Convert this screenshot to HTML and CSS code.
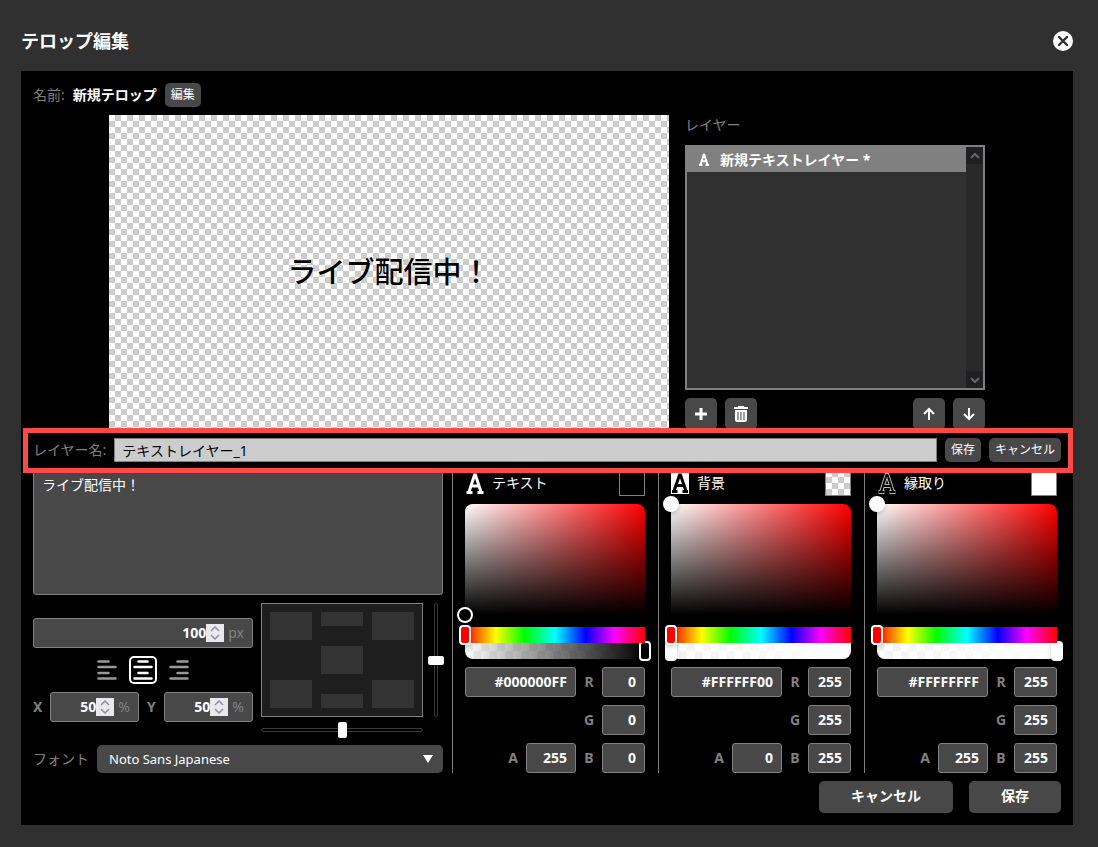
FILE: index.html
```html
<!DOCTYPE html>
<html lang="ja">
<head>
    <meta charset="utf-8">
    <title>テロップ編集</title>
    <link rel="stylesheet" href="styles.css">
</head>
<body>

<div class="dialog">
    <div class="dialog-header">
        <h1 class="title">テロップ編集</h1>
        <button class="close" aria-label="閉じる">
            <svg width="20" height="20" viewBox="0 0 20 20"><circle cx="10" cy="10" r="10" fill="#fff"/><path d="M6 6l8 8M14 6l-8 8" stroke="#303030" stroke-width="2.4" stroke-linecap="round"/></svg>
        </button>
    </div>

    <div class="panel">
        <div class="name-row">
            <span class="caption">名前:</span>
            <b>新規テロップ</b>
            <button class="btn-small">編集</button>
        </div>

        <div class="stage">
            <div class="preview checker">ライブ配信中！</div>
            <div class="layers">
                <div class="caption layers-title">レイヤー</div>
                <div class="layer-list">
                    <div class="layer-items">
                        <div class="layer-item"><svg class="layer-icon" width="12" height="13" viewBox="0 0 20 22"><path d="M4 20L9.500 3h1L16 20M6 14h8M1.500 20.500h6M12.500 20.500h6"/></svg>新規テキストレイヤー *</div>
                    </div>
                    <div class="scrollbar">
                        <div class="scroll-btn"><svg width="10" height="6" viewBox="0 0 10 6"><path d="M1 5l4-4 4 4"/></svg></div>
                        <div class="scroll-btn"><svg width="10" height="6" viewBox="0 0 10 6"><path d="M1 1l4 4 4-4"/></svg></div>
                    </div>
                </div>
                <div class="layer-tools">
                    <button class="btn-icon" aria-label="追加"><svg width="16" height="16" viewBox="0 0 16 16"><path d="M8 2v12M2 8h12" stroke="#fff" stroke-width="3"/></svg></button>
                    <button class="btn-icon" aria-label="削除"><svg width="16" height="16" viewBox="0 0 16 16"><path d="M1 1h4V0h6v1h4v2H1z" fill="#fff"/><path d="M2 4h12v10q0 2-2 2H4q-2 0-2-2z" fill="#fff"/><path d="M5 6v8M8 6v8M11 6v8" stroke="#777" stroke-width="1.4"/></svg></button>
                    <button class="btn-icon push" aria-label="上へ"><svg width="16" height="16" viewBox="0 0 16 16"><path d="M8 14V3M3 8l5-5 5 5" fill="none" stroke="#fff" stroke-width="2"/></svg></button>
                    <button class="btn-icon" aria-label="下へ"><svg width="16" height="16" viewBox="0 0 16 16"><path d="M8 2v11M3 8l5 5 5-5" fill="none" stroke="#fff" stroke-width="2"/></svg></button>
                </div>
            </div>
        </div>

        <div class="layer-name-row">
            <label class="caption" for="layerName">レイヤー名:</label>
            <input class="layer-name" type="text" id="layerName" value="テキストレイヤー_1">
            <button class="btn-small">保存</button>
            <button class="btn-small">キャンセル</button>
        </div>

        <div class="controls">
            <div class="text-col">
                <textarea class="text-input" aria-label="テキスト">ライブ配信中！</textarea>

                <div class="layout-row">
                    <div class="size-group">
                        <div class="number-box">
                            <input type="text" value="100" aria-label="サイズ">
                            <span class="spin"><svg width="10" height="14" viewBox="0 0 10 14"><path d="M1 5l4-4 4 4M1 9l4 4 4-4"/></svg></span>
                            <span class="unit">px</span>
                        </div>
                        <div class="align-row">
                            <button class="align" aria-label="左揃え"><svg width="20" height="20" viewBox="0 0 20 20"><path d="M1.5 1.5h10M1.5 7h17M1.5 13h10M1.5 18.5h17"/></svg></button>
                            <button class="align active" aria-label="中央揃え"><svg width="20" height="20" viewBox="0 0 20 20"><path d="M5.5 1.5h9M1.5 7h17M5.5 13h9M1.5 18.5h17"/></svg></button>
                            <button class="align" aria-label="右揃え"><svg width="20" height="20" viewBox="0 0 20 20"><path d="M8.5 1.5h10M1.5 7h17M8.5 13h10M1.5 18.5h17"/></svg></button>
                        </div>
                        <div class="xy-row">
                            <label class="xy-label" for="posX">X</label>
                            <div class="number-box">
                                <input type="text" id="posX" value="50">
                                <span class="spin"><svg width="10" height="14" viewBox="0 0 10 14"><path d="M1 5l4-4 4 4M1 9l4 4 4-4"/></svg></span>
                                <span class="unit">%</span>
                            </div>
                            <label class="xy-label second" for="posY">Y</label>
                            <div class="number-box">
                                <input type="text" id="posY" value="50">
                                <span class="spin"><svg width="10" height="14" viewBox="0 0 10 14"><path d="M1 5l4-4 4 4M1 9l4 4 4-4"/></svg></span>
                                <span class="unit">%</span>
                            </div>
                        </div>
                    </div>
                    <div class="position">
                        <div class="position-top">
                            <div class="position-grid">
                                <button class="cell" aria-label="左上"></button>
                                <button class="cell half" aria-label="上"></button>
                                <button class="cell" aria-label="右上"></button>
                                <button class="cell middle" aria-label="中央"></button>
                                <button class="cell" aria-label="左下"></button>
                                <button class="cell half bottom" aria-label="下"></button>
                                <button class="cell" aria-label="右下"></button>
                            </div>
                            <input class="slider vertical" type="range" value="50" aria-label="縦位置">
                        </div>
                        <input class="slider" type="range" value="50" aria-label="横位置">
                    </div>
                </div>

                <div class="font-row">
                    <label class="caption" for="font">フォント</label>
                    <div class="select-box">
                        <select id="font"><option>Noto Sans Japanese</option></select>
                        <svg class="arrow" width="10" height="8" viewBox="0 0 10 8"><path d="M0 0h10L5 8z" fill="#fff"/></svg>
                    </div>
                </div>
            </div>

            <div class="color-col">
                <div class="color-head">
                    <svg class="color-icon" width="20" height="22" viewBox="0 0 20 22"><path d="M4 20L9.500 3h1L16 20M6 14h8M1.500 20.500h6M12.500 20.500h6"/></svg>
                    テキスト<span class="swatch"></span>
                </div>
                <div class="saturation"><span class="pointer at-black"></span></div>
                <div class="hue"><input class="track" type="range" min="0" max="360" value="0" aria-label="色相"></div>
                <div class="alpha alpha-black"><input class="track" type="range" min="0" max="255" value="255" aria-label="不透明度"></div>
                <div class="rgba">
                    <div class="rgba-row">
                        <input class="value hex" type="text" value="#000000FF" aria-label="カラーコード">
                        <label for="r1">R</label><input class="value" type="text" id="r1" value="0">
                    </div>
                    <div class="rgba-row"><label for="g1">G</label><input class="value" type="text" id="g1" value="0"></div>
                    <div class="rgba-row">
                        <label for="a1">A</label><input class="value opacity" type="text" id="a1" value="255">
                        <label for="b1">B</label><input class="value" type="text" id="b1" value="0">
                    </div>
                </div>
            </div>

            <div class="color-col">
                <div class="color-head">
                    <svg class="color-icon filled" width="18" height="22" viewBox="1 0 18 22"><path d="M4 19L9.500 3h1L16 19M6 13.500h8M2 19.500h5.500M12.500 19.500h5.500"/></svg>
                    背景<span class="swatch checker"></span>
                </div>
                <div class="saturation"><span class="pointer"></span></div>
                <div class="hue"><input class="track" type="range" min="0" max="360" value="0" aria-label="色相"></div>
                <div class="alpha"><input class="track" type="range" min="0" max="255" value="0" aria-label="不透明度"></div>
                <div class="rgba">
                    <div class="rgba-row">
                        <input class="value hex" type="text" value="#FFFFFF00" aria-label="カラーコード">
                        <label for="r2">R</label><input class="value" type="text" id="r2" value="255">
                    </div>
                    <div class="rgba-row"><label for="g2">G</label><input class="value" type="text" id="g2" value="255"></div>
                    <div class="rgba-row">
                        <label for="a2">A</label><input class="value opacity" type="text" id="a2" value="0">
                        <label for="b2">B</label><input class="value" type="text" id="b2" value="255">
                    </div>
                </div>
            </div>

            <div class="color-col">
                <div class="color-head">
                    <svg class="color-icon outline" width="20" height="22" viewBox="0 0 20 22"><path class="edge" d="M4 20L9.500 3h1L16 20M6 14h8M1.500 20h6M12.500 20h6"/><path class="core" d="M4 20L9.500 3h1L16 20M6 14h8M1.500 20h6M12.500 20h6"/></svg>
                    縁取り<span class="swatch white"></span>
                </div>
                <div class="saturation"><span class="pointer"></span></div>
                <div class="hue"><input class="track" type="range" min="0" max="360" value="0" aria-label="色相"></div>
                <div class="alpha"><input class="track" type="range" min="0" max="255" value="255" aria-label="不透明度"></div>
                <div class="rgba">
                    <div class="rgba-row">
                        <input class="value hex" type="text" value="#FFFFFFFF" aria-label="カラーコード">
                        <label for="r3">R</label><input class="value" type="text" id="r3" value="255">
                    </div>
                    <div class="rgba-row"><label for="g3">G</label><input class="value" type="text" id="g3" value="255"></div>
                    <div class="rgba-row">
                        <label for="a3">A</label><input class="value opacity" type="text" id="a3" value="255">
                        <label for="b3">B</label><input class="value" type="text" id="b3" value="255">
                    </div>
                </div>
            </div>
        </div>

        <div class="footer">
            <button class="btn">キャンセル</button>
            <button class="btn">保存</button>
        </div>
    </div>
</div>

</body>
</html>
```

FILE: styles.css
```css
* {
    box-sizing: border-box;
}
body {
    margin: 0;
    background: #303030;
    color: #fff;
    font-family: "Noto Sans", "Noto Sans CJK JP", sans-serif;
    font-size: 14px;
    line-height: 20px;
}
button, input, select, textarea {
    margin: 0;
    padding: 0;
    border: none;
    color: inherit;
    font: inherit;
}
button {
    cursor: pointer;
}
svg {
    display: block;
}

/* dialog */
.dialog {
    padding: 30px 25px 22px 21px;
}
.dialog-header {
    display: flex;
    align-items: center;
    justify-content: space-between;
    margin-bottom: 19px;
}
.title {
    margin: 0;
    font-size: 18px;
    line-height: 22px;
}
.close {
    background: none;
}
.panel {
    padding: 12px;
    background: #000;
}
.caption {
    color: #808080;
}

/* buttons */
.btn-small {
    height: 24px;
    padding: 0 6px;
    border-radius: 5px;
    background: #484848;
    font-size: 12px;
    white-space: nowrap;
}
.btn-icon {
    display: flex;
    align-items: center;
    justify-content: center;
    width: 32px;
    height: 32px;
    border-radius: 5px;
    background: #484848;
}
.btn {
    height: 32px;
    padding: 0 32px 2px;
    border-radius: 5px;
    background: #484848;
    font-weight: bold;
}

.name-row {
    display: flex;
    align-items: center;
    gap: 8px;
    margin-bottom: 8px;
}

/* preview and layer list */
.checker {
    background: conic-gradient(#ccc 25%, #fff 0 50%, #ccc 0 75%, #fff 0) 0 0 / 12px 12px;
}
.stage {
    display: flex;
    justify-content: center;
    gap: 16px;
    margin-bottom: 8px;
}
.preview {
    display: flex;
    align-items: center;
    justify-content: center;
    width: 560px;
    height: 315px;
    padding-bottom: 6px;
    color: #000;
    font-family: "Noto Sans CJK JP", sans-serif;
    font-size: 29px;
    font-weight: 500;
    text-shadow: 0 0 1px #fff, 0 0 1px #fff;
}
.layers {
    display: flex;
    flex-direction: column;
    width: 300px;
}
.layers-title {
    margin-bottom: 10px;
}
.layer-list {
    display: flex;
    flex: 1;
    border: 2px solid #808080;
    background: #303030;
}
.layer-items {
    flex: 1;
}
.layer-item {
    display: flex;
    align-items: center;
    gap: 10px;
    height: 25px;
    padding-left: 11px;
    background: #808080;
    font-weight: bold;
}
.layer-icon path {
    fill: none;
    stroke: #fff;
    stroke-width: 3.4;
}
.scrollbar {
    display: flex;
    flex-direction: column;
    justify-content: space-between;
    width: 17px;
    background: #292929;
}
.scroll-btn {
    display: flex;
    align-items: center;
    justify-content: center;
    height: 17px;
    background: #202022;
}
.scroll-btn path {
    fill: none;
    stroke: #686868;
    stroke-width: 2;
}
.layer-tools {
    display: flex;
    gap: 8px;
    margin-top: 8px;
}
.push {
    margin-left: auto;
}

/* layer name, framed in red */
.layer-name-row {
    position: relative;
    display: flex;
    align-items: center;
    gap: 8px;
    margin-bottom: 8px;
}
.layer-name-row::after {
    content: "";
    position: absolute;
    z-index: 2;
    inset: -10px -12px -11px -10px;
    border: 5px solid #ff4848;
    pointer-events: none;
}
.layer-name {
    flex: 1;
    height: 24px;
    padding: 0 7px;
    border: 1px solid #808080;
    background: #ccc;
    color: #000;
}

/* text settings */
.controls {
    display: flex;
    margin-bottom: 8px;
}
.text-col {
    display: flex;
    flex: 1;
    flex-direction: column;
    gap: 8px;
    min-width: 0;
    margin-right: 9px;
}
.text-input {
    display: block;
    width: 100%;
    height: 125px;
    padding: 4px 8px;
    border: 1px solid #808080;
    border-radius: 3px;
    background: #484848;
    resize: none;
}
.layout-row {
    display: flex;
    align-items: center;
    gap: 8px;
    height: 134px;
}
.size-group {
    display: flex;
    flex: 1;
    flex-direction: column;
    gap: 8px;
    min-width: 0;
}
.number-box {
    display: flex;
    flex: 1;
    align-items: center;
    min-width: 0;
    height: 30px;
    padding-right: 8px;
    border: 1px solid #808080;
    border-radius: 3px;
    background: #484848;
}
.size-group > .number-box {
    flex: none;
}
.number-box input {
    flex: 1;
    min-width: 0;
    background: none;
    font-weight: bold;
    text-align: right;
}
.spin {
    display: flex;
    align-items: center;
    justify-content: center;
    width: 18px;
    height: 18px;
    margin-right: 4px;
    background: #e9e9ed;
}
.spin path {
    fill: none;
    stroke: #8f8f9d;
    stroke-width: 1.5;
}
.unit {
    color: #808080;
}
.align-row {
    display: flex;
    justify-content: center;
    gap: 8px;
}
.align {
    width: 28px;
    height: 28px;
    padding: 2px;
    border: 2px solid transparent;
    border-radius: 5px;
    background: none;
}
.align path {
    stroke: #999;
    stroke-width: 2.5;
    stroke-linecap: round;
}
.align.active {
    border-color: #fff;
}
.align.active path {
    stroke: #fff;
}
.xy-row {
    display: flex;
    align-items: center;
}
.xy-label {
    width: 17px;
    color: #808080;
    font-weight: bold;
}
.xy-label.second {
    margin-left: 8px;
}

/* position picker */
.position {
    flex: none;
    align-self: flex-start;
    width: 182px;
}
.position-top {
    display: flex;
    gap: 5px;
    margin-bottom: 5px;
}
.position-grid {
    display: grid;
    grid-template-columns: repeat(3, 42px);
    grid-template-rows: repeat(3, 28px);
    gap: 6px 9px;
    padding: 8px;
    border: 1px solid #808080;
    background: #1e1e1e;
}
.cell {
    background: #333;
}
.cell.half {
    height: 14px;
}
.cell.bottom {
    align-self: end;
}
.cell.middle {
    grid-column: 2;
}
.cell.middle + .cell {
    grid-column: 1;
}
.slider {
    appearance: none;
    display: block;
    width: 162px;
    height: 16px;
    background: none;
}
.slider::-webkit-slider-runnable-track {
    height: 4px;
    border: 1px solid #383838;
    border-radius: 2px;
}
.slider::-webkit-slider-thumb {
    appearance: none;
    width: 9px;
    height: 16px;
    margin-top: -7px;
    border-radius: 2px;
    background: #fafafa;
}
.slider.vertical {
    writing-mode: vertical-lr;
    width: 16px;
    height: 114px;
}
.slider.vertical::-webkit-slider-runnable-track {
    width: 4px;
    height: auto;
}
.slider.vertical::-webkit-slider-thumb {
    width: 16px;
    height: 9px;
    margin-top: 0;
    margin-left: -7px;
}

.font-row {
    display: flex;
    align-items: center;
    gap: 8px;
}
.select-box {
    position: relative;
    flex: 1;
}
.select-box select {
    appearance: none;
    display: block;
    width: 100%;
    height: 28px;
    padding: 0 12px;
    border-radius: 5px;
    background: #484848;
    font-size: 13px;
}
.arrow {
    position: absolute;
    top: 10px;
    right: 10px;
    pointer-events: none;
}

/* color pickers */
.color-col {
    flex: none;
    width: 206px;
    padding: 0 13px 0 12px;
    border-left: 1px solid #808080;
}
.color-col:last-child {
    width: 197px;
    padding-right: 4px;
}
.color-head {
    display: flex;
    align-items: center;
    height: 26px;
    margin-bottom: 8px;
}
.color-icon {
    margin-right: 7px;
}
.color-icon path {
    fill: none;
    stroke: #fff;
    stroke-width: 3;
}
.color-icon.filled {
    margin-right: 8px;
    background: #fff;
}
.color-icon.filled path {
    stroke: #000;
}
.color-icon .edge {
    stroke: #bbb;
    stroke-width: 4;
    stroke-linecap: square;
}
.color-icon .core {
    stroke: #000;
    stroke-width: 2;
    stroke-linecap: square;
}
.color-icon.outline .edge {
    stroke-linecap: butt;
}
.color-icon.outline .core {
    stroke-linecap: butt;
}
.swatch {
    width: 26px;
    height: 26px;
    margin-left: auto;
    border: 1px solid #808080;
}
.swatch.white {
    background: #fff;
}
.saturation {
    position: relative;
    height: 123px;
    border-bottom: 12px solid #000;
    border-radius: 8px 8px 0 0;
    background: linear-gradient(0deg, #000, transparent), linear-gradient(90deg, #fff, rgba(255, 255, 255, 0)), #f00;
}
.pointer {
    position: absolute;
    top: -8px;
    left: -8px;
    width: 16px;
    height: 16px;
    border: 2px solid #fff;
    border-radius: 50%;
    background: #fff;
    box-shadow: 0 2px 4px rgba(0, 0, 0, .2);
}
.pointer.at-black {
    top: auto;
    bottom: -8px;
    background: #000;
}
.hue {
    position: relative;
    z-index: 1;
    height: 16px;
    background: linear-gradient(90deg, #f00 0%, #ff0 17%, #0f0 33%, #0ff 50%, #00f 67%, #f0f 83%, #f00 100%);
}
.alpha {
    position: relative;
    z-index: 1;
    height: 16px;
    margin-bottom: 8px;
    border-radius: 0 0 8px 8px;
    background: linear-gradient(90deg, rgba(255, 255, 255, 0), #fff), conic-gradient(#fff 25%, #f2f2f2 0 50%, #fff 0 75%, #f2f2f2 0) 0 0 / 16px 16px;
}
.alpha-black {
    background: linear-gradient(90deg, rgba(0, 0, 0, 0), #000), conic-gradient(#fff 25%, #f2f2f2 0 50%, #fff 0 75%, #f2f2f2 0) 0 0 / 16px 16px;
}
.track {
    appearance: none;
    display: block;
    width: 192px;
    height: 20px;
    margin: 0 -6px;
    background: none;
    transform: translateY(-2px);
}
.hue .track {
    position: relative;
    z-index: 2;
}
.track::-webkit-slider-thumb {
    appearance: none;
    width: 12px;
    height: 20px;
    border: 2px solid #fff;
    border-radius: 4px;
    background: #fff;
    box-shadow: 0 2px 4px rgba(0, 0, 0, .2);
}
.hue .track::-webkit-slider-thumb {
    background: #f00;
}
.alpha-black .track::-webkit-slider-thumb {
    background: #000;
}
/* keep the hue thumb above the alpha bar */
.hue {
    z-index: 2;
}
.rgba {
    display: flex;
    flex-direction: column;
    gap: 8px;
}
.rgba-row {
    display: flex;
    align-items: center;
    justify-content: flex-end;
    color: #808080;
    font-weight: bold;
}
.rgba-row label {
    width: 26px;
    text-align: center;
}
.value {
    width: 43px;
    height: 30px;
    padding: 0 8px 2px;
    border: 1px solid #808080;
    border-radius: 3px;
    background: #484848;
    color: #fff;
    text-align: right;
}
.value.hex {
    width: 111px;
}
.value.opacity {
    width: 50px;
}

.footer {
    display: flex;
    justify-content: flex-end;
    gap: 16px;
}
```
